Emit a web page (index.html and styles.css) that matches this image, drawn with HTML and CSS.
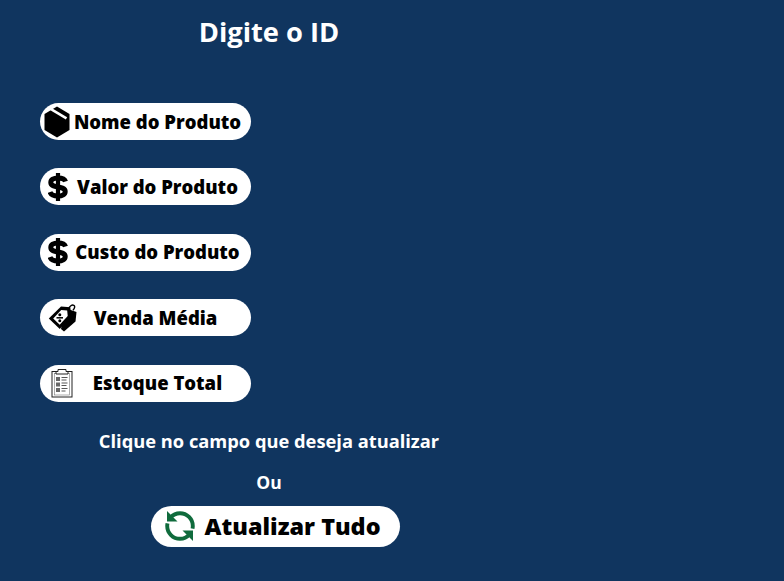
FILE: index.html
```html
<!DOCTYPE html>
<html lang="pt-BR">
<head>
<meta charset="utf-8">
<title>Atualizar produto</title>
<link rel="stylesheet" href="styles.css">
</head>
<body>
<main class="panel">
  <h1 class="title">Digite o ID</h1>
  <div class="fields">
    <button class="pill">
      <svg class="icon" viewBox="0 0 26 32" width="26" height="32"><path d="M13 .5 25.500 8v16L13 31.500.5 24V8z" fill="#000"/><path d="M7 3.200 22.500 12.300" stroke="#fff" stroke-width="2.600"/></svg>
      <span class="label">Nome do Produto</span>
    </button>
    <button class="pill">
      <svg class="icon dollar" viewBox="0 0 20 28" width="20" height="28"><path d="M10 0v28" stroke="#000" stroke-width="4.200"/><path d="M17.500 8.600C16.800 6.300 14 5 10 5 5.500 5 2.800 6.700 2.800 9.500c0 6.200 14.400 2.800 14.400 9 0 2.900-2.900 4.500-7.200 4.500-4.400 0-7.200-1.500-8-4" fill="none" stroke="#000" stroke-width="5"/></svg>
      <span class="label">Valor do Produto</span>
    </button>
    <button class="pill">
      <svg class="icon dollar" viewBox="0 0 20 28" width="20" height="28"><path d="M10 0v28" stroke="#000" stroke-width="4.200"/><path d="M17.500 8.600C16.800 6.300 14 5 10 5 5.500 5 2.800 6.700 2.800 9.500c0 6.200 14.400 2.800 14.400 9 0 2.900-2.900 4.500-7.200 4.500-4.400 0-7.200-1.500-8-4" fill="none" stroke="#000" stroke-width="5"/></svg>
      <span class="label">Custo do Produto</span>
    </button>
    <button class="pill">
      <svg class="icon icon-tag" viewBox="0 0 30 28" width="30" height="28"><path d="M17 4 28.500 8 27.500 17.500 16 27.500 13 25z" fill="#000"/><path d="M13 2.500 22.300 3.300 23.100 12.600 11.800 25 .8 14.500z" fill="#000"/><path d="M13.200 6 19.200 6.600 19.700 12 11.700 20.700 5.200 14.500z" fill="#fff"/><path d="M8.500 13.800h6.500" stroke="#000" stroke-width="1.500"/><circle cx="11.800" cy="10.800" r="1.500" fill="#000"/><circle cx="11.800" cy="16.800" r="1.500" fill="#000"/><path d="M20.500 5C21.500 2 24 .5 25.800 1.300c1.500.8.900 3-.8 5" fill="none" stroke="#000" stroke-width="1.400"/></svg>
      <span class="label label-short">Venda Média</span>
    </button>
    <button class="pill">
      <svg class="icon icon-shifted" viewBox="0 0 24 30" width="24" height="30"><rect x="2" y="3.500" width="20" height="25.500" fill="#fff" stroke="#222" stroke-width="1"/><rect x="4.500" y="5.500" width="15" height="21.500" fill="none" stroke="#777" stroke-width=".6"/><path d="M8 3.500V1.500h8v2h2v2.500H6V3.500z" fill="#fff" stroke="#222" stroke-width="1"/><g fill="#666"><rect x="6" y="9" width="4" height="4"/><rect x="6" y="14.500" width="4" height="4"/><rect x="6" y="20" width="4" height="4"/></g><g stroke="#444" stroke-width=".9"><path d="M11.500 9.500h6M11.500 12h5M11.500 15h6M11.500 17.500h5M11.500 20.500h6M11.500 23h4"/></g></svg>
      <span class="label">Estoque Total</span>
    </button>
  </div>
  <p class="hint">Clique no campo que deseja atualizar</p>
  <p class="or">Ou</p>
  <button class="pill-wide">
    <svg class="refresh" viewBox="0 0 32 32" width="32" height="32"><g fill="none" stroke="#0f6b3c" stroke-width="3.900"><path d="M6.500 7.500C9 4.700 12.300 3.200 16 3.200c7 0 12.800 5.800 12.800 12.800 0 1-.1 1.800-.3 2.700"/><path d="M25.500 24.500C23 27.300 19.700 28.800 16 28.800 9 28.800 3.200 23 3.200 16c0-1 .1-1.800.3-2.700"/></g><path d="M3 1 3 11.500 13.500 11.500z" fill="#0f6b3c"/><path d="M29 31 29 20.500 18.500 20.500z" fill="#0f6b3c"/></svg>
    <span class="label-wide">Atualizar Tudo</span>
  </button>
</main>
</body>
</html>
```
FILE: styles.css
```css
* {
  box-sizing: border-box;
}

html,
body {
  margin: 0;
  height: 100%;
}

body {
  background: #10355f;
  color: #fff;
  font-family: "Open Sans", sans-serif;
}

.panel {
  width: 538px;
  display: flex;
  flex-direction: column;
  align-items: center;
}

.title {
  margin: 13px 0 0;
  font-size: 27.3px;
  line-height: 37px;
  font-weight: 700;
}

.fields {
  align-self: flex-start;
  margin: 53px 0 0 40px;
  display: flex;
  flex-direction: column;
  gap: 28.4px;
}

.pill {
  width: 211px;
  height: 37px;
  padding: 0 0 0 4px;
  border: 0;
  border-radius: 18.5px;
  background: #fff;
  color: #000;
  font-family: inherit;
  display: flex;
  align-items: center;
}

.icon {
  flex: none;
  margin-right: -6px;
}

.dollar {
  margin-left: 4px;
  margin-right: -4px;
}

.icon-shifted {
  margin-left: 6px;
  margin-right: -10px;
}

.icon-tag {
  margin-left: 4px;
  margin-right: -10px;
}

.label {
  flex: 1;
  padding-bottom: 1px;
  font-size: 18.5px;
  font-weight: 800;
  text-align: center;
  white-space: nowrap;
}

.label-short {
  padding-right: 8px;
}

.hint {
  margin: 27px 0 0;
  font-size: 18.3px;
  line-height: 24px;
  font-weight: 700;
}

.or {
  margin: 17px 0 0;
  font-size: 17.5px;
  line-height: 24px;
  font-weight: 700;
}

.pill-wide {
  width: 249px;
  height: 41px;
  margin: 12px 0 0 12px;
  padding: 0 0 0 13px;
  border: 0;
  border-radius: 20.5px;
  background: #fff;
  color: #000;
  font-family: inherit;
  display: flex;
  align-items: center;
  gap: 9px;
}

.refresh {
  flex: none;
}

.label-wide {
  padding-bottom: 1px;
  font-size: 23.4px;
  font-weight: 800;
  white-space: nowrap;
}
```
